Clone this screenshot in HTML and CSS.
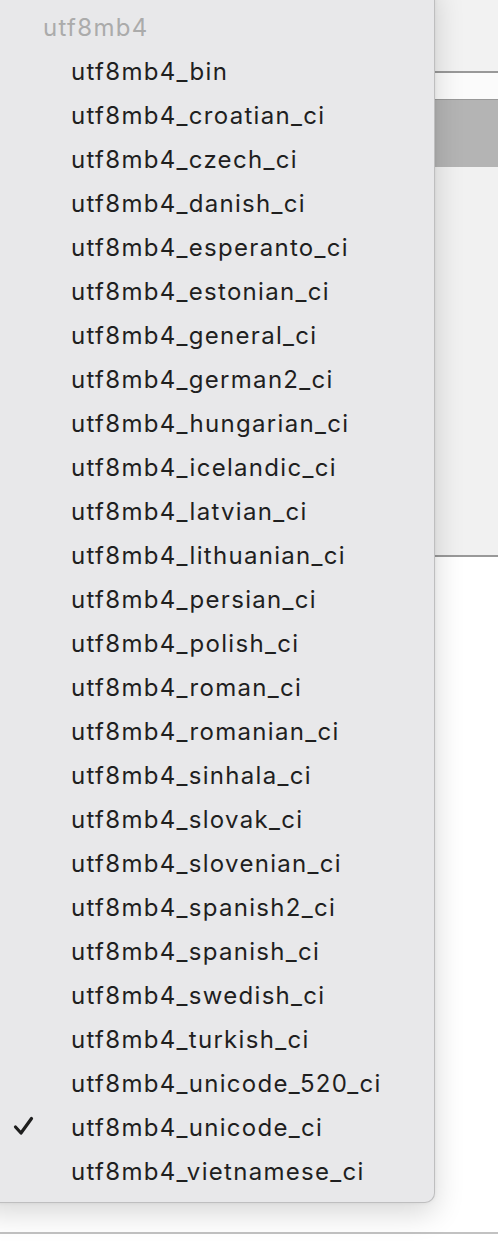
FILE: index.html
```html
<!DOCTYPE html>
<html>
<head>
<meta charset="utf-8">
<link rel="stylesheet" href="styles.css">
</head>
<body>
<div class="window">
  <div class="band band-top"></div>
  <div class="rule"></div>
  <div class="band band-white"></div>
  <div class="rule thin"></div>
  <div class="band band-gray"></div>
  <div class="band band-light"></div>
  <div class="rule"></div>
  <div class="band band-bottom"></div>
  <div class="rule soft"></div>
  <div class="band band-end"></div>

  <div class="menu">
    <div class="row header">utf8mb4</div>
    <div class="row">utf8mb4_bin</div>
    <div class="row">utf8mb4_croatian_ci</div>
    <div class="row">utf8mb4_czech_ci</div>
    <div class="row">utf8mb4_danish_ci</div>
    <div class="row">utf8mb4_esperanto_ci</div>
    <div class="row">utf8mb4_estonian_ci</div>
    <div class="row">utf8mb4_general_ci</div>
    <div class="row">utf8mb4_german2_ci</div>
    <div class="row">utf8mb4_hungarian_ci</div>
    <div class="row">utf8mb4_icelandic_ci</div>
    <div class="row">utf8mb4_latvian_ci</div>
    <div class="row">utf8mb4_lithuanian_ci</div>
    <div class="row">utf8mb4_persian_ci</div>
    <div class="row">utf8mb4_polish_ci</div>
    <div class="row">utf8mb4_roman_ci</div>
    <div class="row">utf8mb4_romanian_ci</div>
    <div class="row">utf8mb4_sinhala_ci</div>
    <div class="row">utf8mb4_slovak_ci</div>
    <div class="row">utf8mb4_slovenian_ci</div>
    <div class="row">utf8mb4_spanish2_ci</div>
    <div class="row">utf8mb4_spanish_ci</div>
    <div class="row">utf8mb4_swedish_ci</div>
    <div class="row">utf8mb4_turkish_ci</div>
    <div class="row">utf8mb4_unicode_520_ci</div>
    <div class="row checked"><svg class="check" width="24" height="22" viewBox="0 0 24 22"><path d="M3.5 12 L9 18 L19.5 3.5" fill="none" stroke="#1e1e1e" stroke-width="3.2" stroke-linecap="round" stroke-linejoin="round"/></svg>utf8mb4_unicode_ci</div>
    <div class="row">utf8mb4_vietnamese_ci</div>
  </div>
</div>
</body>
</html>
```

FILE: styles.css
```css
html, body {
  margin: 0;
  padding: 0;
  background: #ffffff;
}

.window {
  position: relative;
  width: 498px;
  height: 1260px;
  overflow: hidden;
  display: flex;
  flex-direction: column;
}

.band-top { height: 71px; background: #f2f2f2; }
.rule { height: 2px; background: #999999; }
.rule.thin { height: 1px; }
.rule.soft { background: #c2c2c2; }
.band-white { height: 26px; background: #fbfbfb; }
.band-gray { height: 67px; background: #b4b4b4; }
.band-light { height: 388px; background: #f1f1f1; }
.band-bottom { height: 675px; background: #ffffff; }
.band-end { flex: 1; background: #ffffff; }

.menu {
  position: absolute;
  left: -20px;
  top: -20px;
  width: 455px;
  box-sizing: border-box;
  padding: 24px 0 9px 20px;
  background: #e8e8ea;
  border: 1px solid rgba(0, 0, 0, 0.18);
  border-radius: 10px;
  box-shadow: 0 10px 30px rgba(0, 0, 0, 0.16), 0 0 4px rgba(0, 0, 0, 0.06);
  font-family: Inter, "Open Sans", sans-serif;
  font-size: 24px;
  letter-spacing: 1.3px;
  color: #1f1f1f;
}

.row {
  height: 44px;
  display: flex;
  align-items: center;
  padding-left: 70px;
  position: relative;
  white-space: nowrap;
}

.row.header {
  padding-left: 42px;
  color: #ababab;
}

.check {
  position: absolute;
  left: 11px;
  top: 10px;
}
```
